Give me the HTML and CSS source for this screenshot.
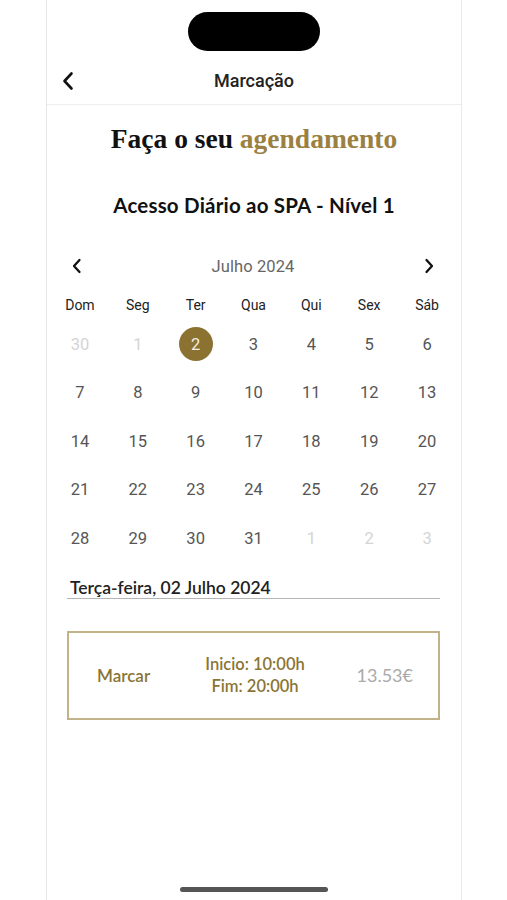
FILE: index.html
```html
<!DOCTYPE html>
<html lang="pt">
<head>
<meta charset="utf-8">
<title>Marcação</title>
<link rel="stylesheet" href="styles.css">
</head>
<body>
<div class="phone">
  <div class="island"></div>
  <header class="topbar">
    <span class="back">
      <svg width="14" height="20" viewBox="0 0 14 20"><path d="M10.5 2.5 L3.5 10 L10.5 17.5" fill="none" stroke="#111" stroke-width="2.6" stroke-linecap="round" stroke-linejoin="round"/></svg>
    </span>
    <span class="topbar-title">Marcação</span>
    <span class="spacer"></span>
  </header>

  <h1 class="headline">Faça o seu <span class="gold">agendamento</span></h1>
  <h2 class="service">Acesso Diário ao SPA - Nível 1</h2>

  <section class="calendar">
    <div class="month-nav">
      <span class="nav-btn">
        <svg width="12" height="16" viewBox="0 0 12 16"><path d="M8.5 2 L3 8 L8.5 14" fill="none" stroke="#111" stroke-width="2.3" stroke-linecap="round" stroke-linejoin="round"/></svg>
      </span>
      <span class="month-title">Julho 2024</span>
      <span class="nav-btn">
        <svg width="12" height="16" viewBox="0 0 12 16"><path d="M3.5 2 L9 8 L3.5 14" fill="none" stroke="#111" stroke-width="2.3" stroke-linecap="round" stroke-linejoin="round"/></svg>
      </span>
    </div>
    <div class="weekdays">
      <span>Dom</span><span>Seg</span><span>Ter</span><span>Qua</span><span>Qui</span><span>Sex</span><span>Sáb</span>
    </div>
    <div class="days">
      <span class="day muted">30</span>
      <span class="day muted">1</span>
      <span class="day selected"><b>2</b></span>
      <span class="day">3</span>
      <span class="day">4</span>
      <span class="day">5</span>
      <span class="day">6</span>
      <span class="day">7</span>
      <span class="day">8</span>
      <span class="day">9</span>
      <span class="day">10</span>
      <span class="day">11</span>
      <span class="day">12</span>
      <span class="day">13</span>
      <span class="day">14</span>
      <span class="day">15</span>
      <span class="day">16</span>
      <span class="day">17</span>
      <span class="day">18</span>
      <span class="day">19</span>
      <span class="day">20</span>
      <span class="day">21</span>
      <span class="day">22</span>
      <span class="day">23</span>
      <span class="day">24</span>
      <span class="day">25</span>
      <span class="day">26</span>
      <span class="day">27</span>
      <span class="day">28</span>
      <span class="day">29</span>
      <span class="day">30</span>
      <span class="day">31</span>
      <span class="day muted">1</span>
      <span class="day muted">2</span>
      <span class="day muted">3</span>
    </div>
  </section>

  <div class="date-label">Terça-feira, 02 Julho 2024</div>

  <div class="slot">
    <span class="slot-action">Marcar</span>
    <span class="slot-time">Inicio: 10:00h<br>Fim: 20:00h</span>
    <span class="slot-price">13.53€</span>
  </div>

  <div class="home-indicator"></div>
</div>
</body>
</html>
```

FILE: styles.css
```css
* { box-sizing: border-box; }
html, body { margin: 0; padding: 0; background: #fff; }
body { font-family: Roboto, "Noto Sans", sans-serif; }

.phone {
  width: 416px;
  height: 900px;
  margin-left: 46px;
  border-left: 1px solid #e6e6e6;
  border-right: 1px solid #ece9e4;
  display: flex;
  flex-direction: column;
  background: #fff;
}

.island {
  align-self: center;
  width: 132px;
  height: 39px;
  margin-top: 12px;
  background: #000;
  border-radius: 20px;
}

.topbar {
  margin-top: 7px;
  height: 47px;
  border-bottom: 1px solid #eeeeee;
  display: flex;
  align-items: center;
  padding: 0 0 1px 14px;
}
.back { width: 30px; display: flex; align-items: center; }
.back svg { display: block; }
.topbar-title {
  flex: 1;
  text-align: center;
  font-family: Roboto, sans-serif;
  font-size: 18px;
  font-weight: 500;
  color: #222;
  margin-right: 30px;
  margin-left: -14px;
}
.spacer { width: 0; }

.headline {
  margin: 17px 0 0;
  height: 34px;
  line-height: 34px;
  text-align: center;
  font-family: "Liberation Serif", "DejaVu Serif", serif;
  font-weight: 700;
  font-size: 27.5px;
  color: #111;
}
.gold { color: #9a8142; }

.service {
  margin: 36px 0 0;
  height: 26px;
  line-height: 26px;
  text-align: center;
  font-family: Lato, "Noto Sans", sans-serif;
  font-weight: 700;
  font-size: 20.5px;
  letter-spacing: 0.2px;
  color: #111;
}

.calendar { margin: 33px 5px 0 4px; }
.month-nav {
  height: 30px;
  display: flex;
  align-items: center;
  justify-content: space-between;
  padding: 0 21px 0 20px;
}
.nav-btn { width: 12px; display: flex; }
.nav-btn svg { display: block; }
.month-title {
  font-size: 16.5px;
  color: #666;
  letter-spacing: 0.1px;
}

.weekdays {
  margin-top: 14px;
  height: 20px;
  display: grid;
  grid-template-columns: repeat(7, 1fr);
  align-items: center;
  text-align: center;
  font-size: 14px;
  font-weight: 400;
  color: #222;
}

.days {
  margin-top: 5px;
  display: grid;
  grid-template-columns: repeat(7, 1fr);
  grid-auto-rows: 48.5px;
}
.day {
  display: flex;
  align-items: center;
  justify-content: center;
  font-size: 16.5px;
  color: #555;
}
.day.muted { color: #d4d4d4; }
.day.selected b {
  width: 34px;
  height: 34px;
  border-radius: 50%;
  background: #8b7230;
  color: #f3eee2;
  font-weight: 400;
  display: flex;
  align-items: center;
  justify-content: center;
}

.date-label {
  margin: 15px 21px 0 20px;
  height: 21px;
  line-height: 20px;
  padding-left: 3px;
  border-bottom: 1px solid #b5b5b5;
  font-family: Lato, "Noto Sans", sans-serif;
  font-weight: 600;
  font-size: 17.5px;
  color: #222;
}

.slot {
  margin: 32px 21px 0 20px;
  height: 89px;
  border: 2px solid #c2b28a;
  display: grid;
  grid-template-columns: 1fr auto 1fr;
  align-items: center;
  padding: 0 25px 0 28px;
  font-family: Lato, "Noto Sans", sans-serif;
}
.slot-action {
  justify-self: start;
  font-size: 17px;
  font-weight: 600;
  color: #8a7536;
}
.slot-time {
  text-align: center;
  font-size: 16.5px;
  font-weight: 600;
  line-height: 22px;
  color: #8a7536;
}
.slot-price {
  justify-self: end;
  font-size: 18px;
  color: #aaaaaa;
}

.home-indicator {
  margin-top: auto;
  margin-bottom: 8px;
  align-self: center;
  width: 148px;
  height: 5px;
  border-radius: 3px;
  background: #555;
}
```
